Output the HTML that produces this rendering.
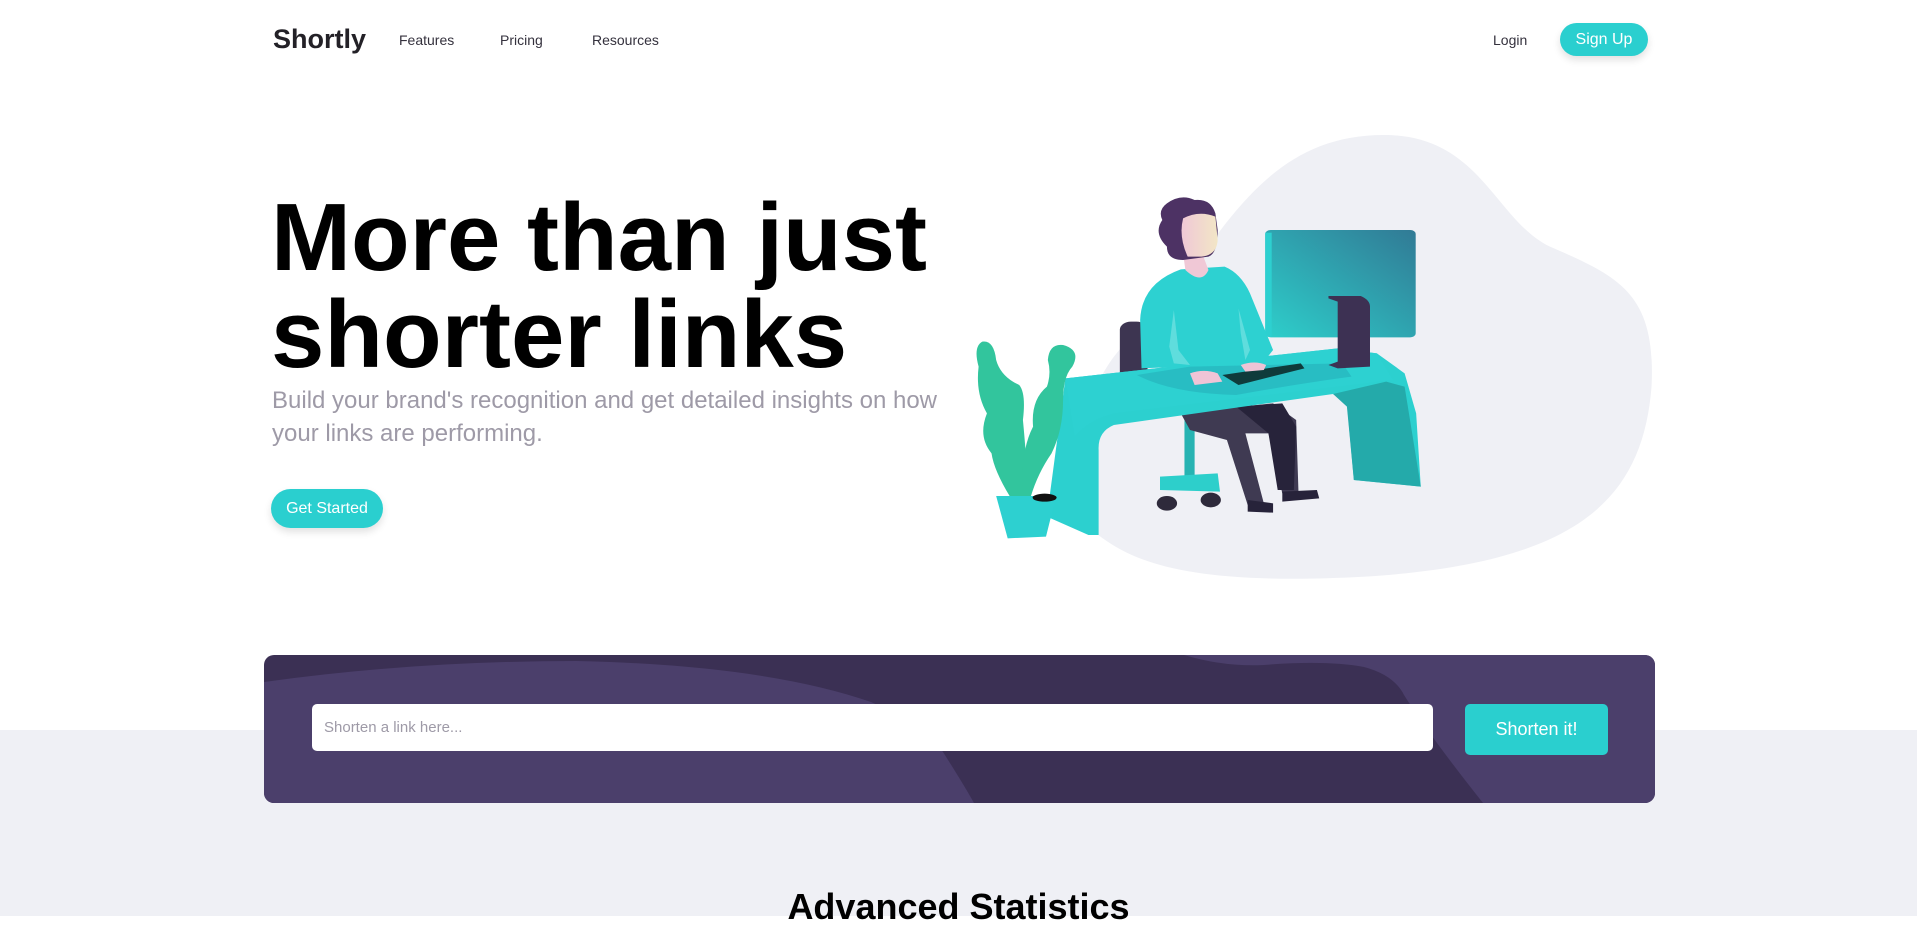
<!DOCTYPE html>
<html><head><meta charset="utf-8"><style>
*{margin:0;padding:0;box-sizing:border-box}
body{width:1917px;height:916px;overflow:hidden;background:#fff;font-family:"Liberation Sans",Arial,sans-serif;position:relative}
.abs{position:absolute}
.nav{font-size:14px;color:#34313d;top:32px}
.btn{background:#2acfcf;color:#fff;border-radius:20px;display:flex;align-items:center;justify-content:center;box-shadow:0 4px 8px rgba(0,0,0,.12)}
</style></head><body>
<div class="abs" style="left:0;top:730px;width:1917px;height:186px;background:#eff0f5"></div>
<div class="abs" style="left:273px;top:24px;font-size:27px;font-weight:bold;color:#232127">Shortly</div>
<div class="abs nav" style="left:399px">Features</div>
<div class="abs nav" style="left:500px">Pricing</div>
<div class="abs nav" style="left:592px">Resources</div>
<div class="abs nav" style="left:1493px">Login</div>
<div class="abs btn" style="left:1560px;top:23px;width:88px;height:33px;font-size:16px">Sign Up</div>

<div class="abs" style="left:271px;top:189px;font-size:96px;font-weight:bold;line-height:97px;color:#000">More than just<br>shorter links</div>
<div class="abs" style="left:272px;top:384px;font-size:24px;line-height:33px;color:#9e9aa7;width:760px">Build your brand's recognition and get detailed insights on how<br>your links are performing.</div>
<div class="abs btn" style="left:271px;top:489px;width:112px;height:39px;font-size:16px">Get Started</div>

<svg class="abs" style="left:950px;top:120px" width="720" height="480" viewBox="0 0 1560 1440" preserveAspectRatio="none">
<path d="M940 45C1150 45 1180 300 1300 380C1450 470 1530 520 1520 800C1500 1150 1350 1330 900 1370C500 1400 380 1320 300 1220C250 1000 300 700 450 600C600 300 700 45 940 45Z" fill="#eff0f5"/>
<defs><linearGradient id="mg" x1="0" y1="1" x2="1" y2="0"><stop offset="0" stop-color="#2dcfcb"/><stop offset="1" stop-color="#317a95"/></linearGradient>
<linearGradient id="fg" x1="0" x2="1"><stop offset="0" stop-color="#f0c8d6"/><stop offset="1" stop-color="#f2e6c6"/></linearGradient></defs>
<rect x="683" y="330" width="326" height="322" rx="12" fill="url(#mg)"/>
<rect x="683" y="338" width="14" height="312" fill="#2dd0d0"/>
<rect x="368" y="605" width="60" height="190" rx="24" fill="#3d3551"/>
<rect x="508" y="880" width="22" height="190" fill="#27b3b2"/>
<path d="M455 1070L580 1060L585 1115L455 1110Z" fill="#2dcfcb"/>
<circle cx="470" cy="1150" r="22" fill="#2e2a3b"/><circle cx="565" cy="1140" r="22" fill="#2e2a3b"/>
<path d="M500 880L700 850L750 900L755 1115L720 1120L690 940L640 940L680 1150L645 1155L600 960L520 930Z" fill="#3f3a52"/>
<path d="M620 860L720 850L750 920L745 1110L710 1110L690 940Z" fill="#27233a"/>
<path d="M645 1140L700 1150L700 1178L645 1175Z" fill="#27233a"/>
<path d="M720 1115L795 1110L800 1135L720 1145Z" fill="#27233a"/>
<path d="M250 775L840 685L925 700L985 760L1010 880L1020 1100L875 1080L860 850L830 822L355 915Q320 935 322 990L322 1245L300 1245L210 1190L250 775Z" fill="#2cd0cf"/>
<path d="M830 822L945 785L985 800L1020 1100L875 1080L860 860Z" fill="#24aaaa"/>
<path d="M250 775L840 685L925 700L960 780L355 880Q300 900 270 950Z" fill="#2dd1d1"/>
<path d="M405 765Q480 820 620 825Q760 790 870 770L850 730L520 740Z" fill="#28bdc3"/>
<path d="M820 528L890 528Q910 540 910 560L910 740L840 745L820 735L840 725L840 545L820 535Z" fill="#3d3153"/>
<path d="M500 448L595 440Q630 460 650 520L700 690L680 725L620 735L510 740L415 745L412 600Q415 490 500 448Z" fill="#2dd1d1"/>
<path d="M485 570L495 690L520 735L485 730L475 680Z" fill="#5fdddd"/>
<path d="M625 565L650 690L640 720L630 640Z" fill="#5fdddd"/>
<path d="M505 400L545 395L560 450Q545 495 510 450Z" fill="#f0c8d6"/>
<path d="M470 250Q500 220 530 240Q565 235 575 280L580 330Q580 400 560 410L505 420Q470 420 470 380Q440 340 460 300Q450 270 470 250Z" fill="#4d3264"/>
<path d="M505 295Q540 270 575 290L580 360Q578 405 545 410L515 410Q495 350 505 295Z" fill="url(#fg)"/>
<path d="M590 765L760 730L768 745L625 795Z" fill="#0f3b3b"/>
<path d="M520 760Q550 745 580 760L590 785L530 795Z" fill="#efc4d6"/>
<path d="M630 735Q660 720 685 735L680 750L640 755Z" fill="#efc4d6"/>
<path d="M70 665Q95 660 100 720Q110 770 150 795Q165 820 158 900Q165 1000 170 1130L130 1130Q95 1050 90 1000Q60 950 80 880Q55 820 62 740Q50 680 70 665Z" fill="#32c59d"/>
<path d="M245 675Q285 690 265 740Q245 770 245 840Q245 930 220 1000Q190 1060 175 1130L160 1130Q150 1000 180 920Q175 840 210 800Q220 760 212 720Q215 670 245 675Z" fill="#32c59d"/>
<path d="M100 1128L230 1128L208 1250L125 1255Z" fill="#2dd0d0"/>
<ellipse cx="205" cy="1133" rx="26" ry="12" fill="#111"/>
</svg>

<div class="abs" style="left:264px;top:655px;width:1391px;height:148px;border-radius:10px;overflow:hidden;background:#3b3054">
<svg width="1391" height="148" viewBox="0 0 1391 148" style="position:absolute;left:0;top:0">
<path d="M0 27Q150 6 312 6Q500 10 607 47Q660 70 679 97Q700 130 710 148L0 148Z" fill="#4b3f6b"/>
<path d="M920 0Q960 12 1000 10Q1062 5 1100 12Q1130 20 1140 40Q1165 80 1219 148L1391 148L1391 0Z" fill="#4b3f6b"/>
</svg>
<div class="abs" style="left:48px;top:49px;width:1121px;height:47px;background:#fff;border-radius:5px;font-size:15px;color:#9e9aa7;padding:15px 12px">Shorten a link here...</div>
<div class="abs" style="left:1201px;top:49px;width:143px;height:51px;background:#2acfcf;border-radius:5px;color:#fff;font-size:18px;display:flex;align-items:center;justify-content:center">Shorten it!</div>
</div>
<div class="abs" style="left:0;width:1917px;top:886px;text-align:center;font-size:36px;font-weight:bold;color:#000">Advanced Statistics</div>
</body></html>
